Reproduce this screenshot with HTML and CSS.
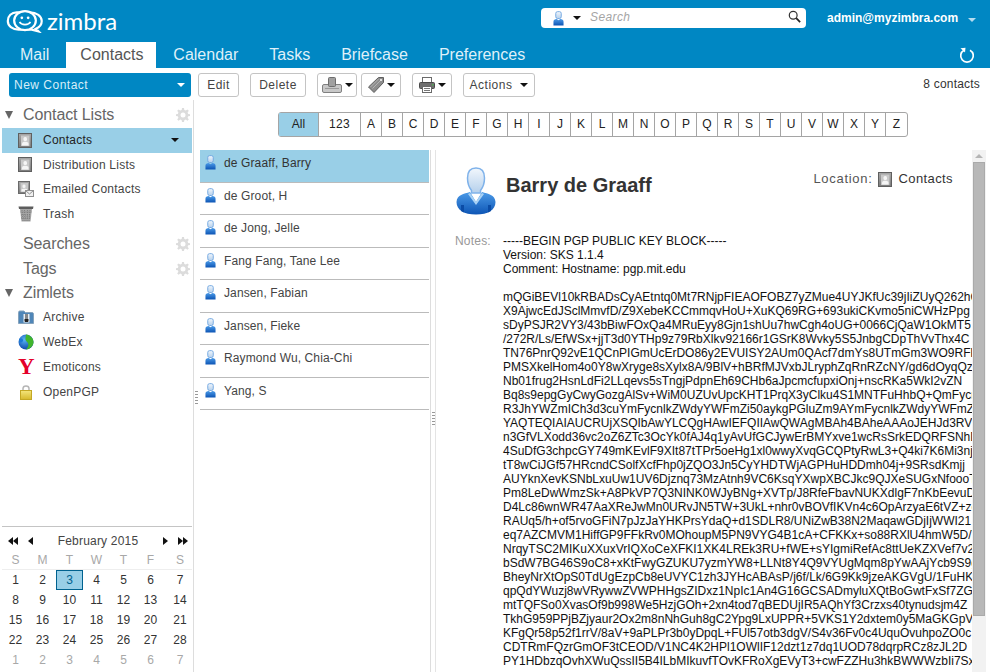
FILE: index.html
```html
<!DOCTYPE html>
<html lang="en">
<head>
    <meta charset="UTF-8">
    <title>Zimbra: Contacts</title>
    <link rel="stylesheet" href="styles.css">
</head>
<body>

<svg class="icon-defs" xmlns="http://www.w3.org/2000/svg">
    <defs>
        <linearGradient id="faceGrad" x1="0" y1="0" x2="0" y2="1">
            <stop offset="0" stop-color="#f2f7fc"/>
            <stop offset="1" stop-color="#b5d0ec"/>
        </linearGradient>
        <linearGradient id="suitGrad" x1="0" y1="0" x2="0" y2="1">
            <stop offset="0" stop-color="#4c9be8"/>
            <stop offset="1" stop-color="#0d55b5"/>
        </linearGradient>
        <linearGradient id="bookGrad" x1="0" y1="0" x2="0" y2="1">
            <stop offset="0" stop-color="#a8a8a8"/>
            <stop offset="1" stop-color="#7c7c7c"/>
        </linearGradient>
        <linearGradient id="lockGrad" x1="0" y1="0" x2="0" y2="1">
            <stop offset="0" stop-color="#f4e67c"/>
            <stop offset="1" stop-color="#d6b92c"/>
        </linearGradient>
        <radialGradient id="globeGrad" cx=".4" cy=".35" r=".7">
            <stop offset="0" stop-color="#58b6f5"/>
            <stop offset="1" stop-color="#0a3fa6"/>
        </radialGradient>
    </defs>
    <symbol id="i-person" viewBox="0 0 12 16">
        <rect x="3" y="0.5" width="6" height="7.5" rx="2" fill="url(#faceGrad)" stroke="#6fa5e0"/>
        <path d="M0.5 15.5V11.5C0.5 9.5 2 9 4 8.5L6 10L8 8.5C10 9 11.5 9.5 11.5 11.5V15.5Z" fill="url(#suitGrad)"/>
    </symbol>
    <symbol id="i-avatar" viewBox="0 0 40 48">
        <path d="M20 1C14 1 11.500 5 11.500 11C11.500 17 13.500 21 15.500 23.500V26H24.500V23.500C26.500 21 28.500 17 28.500 11C28.500 5 26 1 20 1Z" fill="url(#faceGrad)" stroke="#7fb2ea" stroke-width="1.500"/>
        <path d="M14 25C8 27 1 27.500 0.500 35C0.500 43 8 47.500 20 47.500C32 47.500 39.500 43 39.500 35C39 27.500 32 27 26 25L20 35Z" fill="url(#suitGrad)"/>
        <path d="M12 27L20 38L28 27L26 26L20 34.500L14 26Z" fill="#a9d2f5"/>
        <path d="M5 38V44L8 45.500V38ZM35 38V44L32 45.500V38Z" fill="#0b4ca6"/>
    </symbol>
    <symbol id="i-book" viewBox="0 0 14 15">
        <rect x="0.500" y="0.500" width="13" height="14" fill="url(#bookGrad)" stroke="#5f5f5f"/>
        <rect x="3" y="2.500" width="8.500" height="10.500" fill="#c8c8c8"/>
        <rect x="5.500" y="4" width="3.500" height="4" rx="1.500" fill="#f5f5f5"/>
        <path d="M4 12.500V10.500C4 9.300 5.500 8.800 7.200 8.800C9 8.800 10.500 9.300 10.500 10.500V12.500Z" fill="#f5f5f5"/>
    </symbol>
    <symbol id="i-book-mail" viewBox="0 0 16 16">
        <rect x="0.500" y="0.500" width="11" height="12" fill="url(#bookGrad)" stroke="#6a6a6a"/>
        <rect x="2.500" y="2" width="7.500" height="9" fill="#c8c8c8"/>
        <rect x="4.500" y="3.500" width="3" height="3.500" rx="1.300" fill="#f5f5f5"/>
        <path d="M3.500 10.500V8.500C3.500 7.500 10 7.500 9 8.500V10.500Z" fill="#f5f5f5"/>
        <rect x="7.500" y="9.500" width="8" height="6" fill="#f0f0f0" stroke="#8f8f8f"/>
        <path d="M7.500 9.500L11.500 13L15.500 9.500" fill="none" stroke="#8f8f8f"/>
    </symbol>
    <symbol id="i-trash" viewBox="0 0 16 16">
        <path d="M0.500 0.500H15.500L15 3H1Z" fill="#5d5d5d"/>
        <path d="M2 3H14L12.500 15.500H3.500Z" fill="#a5a5a5"/>
        <path d="M4 4L5 15M6.500 4L7 15M9.500 4L9 15M12 4L11 15M2.500 6H13.500M3 9H13M3 12H13" stroke="#6f6f6f" stroke-width=".7" stroke-dasharray="1 1"/>
    </symbol>
    <symbol id="i-archive" viewBox="0 0 16 14">
        <path d="M0.500 2.500C0.500 1.500 1 1 2 1H6L7.500 2.500H14C15 2.500 15.500 3 15.500 4V13.500H0.500Z" fill="#4f86b8" stroke="#86a3bc"/>
        <rect x="5.500" y="4" width="6" height="8.500" fill="#e8eef4"/>
        <path d="M7 5H10M7 7H10M7 9H10V11.500H7Z" stroke="#222" fill="#222"/>
    </symbol>
    <symbol id="i-globe" viewBox="0 0 16 16">
        <circle cx="8" cy="8" r="7.500" fill="url(#globeGrad)"/>
        <path d="M8 0.500C12 1 15.500 4 15.500 8C15.500 12 12 15 8 15.500C10 13 11 11 10 9C8.500 7.500 7 6 7.500 4C7.700 3 8 1.500 8 0.500Z" fill="#41b52d"/>
        <path d="M1 5C3 4 5 4.500 5 6.500C5 8 3 9 1 8Z" fill="#1c78d6"/>
    </symbol>
    <symbol id="i-lock" viewBox="0 0 12 16">
        <path d="M3 7V4.500C3 1 9 1 9 4.500V7" fill="none" stroke="#b6b6b6" stroke-width="1.500"/>
        <rect x="0.500" y="6.500" width="11" height="9" fill="url(#lockGrad)" stroke="#c4a824"/>
    </symbol>
    <symbol id="i-gear" viewBox="0 0 14 14">
        <path d="M6 0H8L8.300 2L9.800 2.600L11.400 1.400L12.800 2.800L11.600 4.400L12.200 6L14 6.200V8L12.200 8.300L11.600 9.800L12.800 11.400L11.400 12.800L9.800 11.600L8.300 12.200L8 14H6L5.700 12.200L4.200 11.600L2.600 12.800L1.200 11.400L2.400 9.800L1.800 8.300L0 8V6.200L1.800 6L2.400 4.400L1.200 2.800L2.600 1.400L4.200 2.600L5.700 2Z" fill="#dcdcdc"/>
        <circle cx="7" cy="7" r="2.500" fill="#fff"/>
    </symbol>
    <symbol id="i-move" viewBox="0 0 20 16">
        <rect x="0.500" y="7.500" width="19" height="8" rx="1.500" fill="#c8c8c8" stroke="#808080"/>
        <rect x="6.500" y="0.500" width="7" height="9" rx="1" fill="#a0a0a0" stroke="#6d6d6d"/>
        <path d="M3 11.500H17" stroke="#9a9a9a"/>
    </symbol>
    <symbol id="i-tag" viewBox="0 0 16 16">
        <path d="M10.500 0.500H15.500V5.500L6 15.500L0.500 10Z" fill="#8d8d8d" stroke="#5f5f5f"/>
        <path d="M2.500 10L10.500 2M4.500 11.500L12 4" stroke="#b3b3b3"/>
        <circle cx="13" cy="3" r="1" fill="#fff"/>
    </symbol>
    <symbol id="i-print" viewBox="0 0 16 16">
        <rect x="3.500" y="0.500" width="9" height="5" fill="#fff" stroke="#6a6a6a"/>
        <rect x="0.500" y="5.500" width="15" height="6" rx="1" fill="#6f6f6f" stroke="#4a4a4a"/>
        <rect x="3.500" y="9.500" width="9" height="6" fill="#fff" stroke="#6a6a6a"/>
        <path d="M5 11.500H11M5 13.500H11" stroke="#777"/>
        <rect x="13" y="7" width="1.500" height="1.500" fill="#4caf50"/>
    </symbol>
</svg>

<div class="app">
    <header class="topbar">
        <div class="logo">
            <svg class="logo-mark" viewBox="0 0 42 26">
                <path d="M12 3.500H26C34 3.500 39.500 7.500 39.500 13C39.500 17 37 20 33 21.500L36 24.500L28.500 22.500H14C7 22.500 2 18.500 2 13C2 7.500 6 3.500 12 3.500Z" fill="none" stroke="#fff" stroke-width="2.400"/>
                <ellipse cx="21" cy="12.500" rx="12" ry="10.500" fill="#0087c3" stroke="#fff" stroke-width="2.400"/>
                <circle cx="17.500" cy="9.500" r="1.500" fill="#fff"/>
                <circle cx="24.500" cy="9.500" r="1.500" fill="#fff"/>
                <path d="M15 14C17 18 25 18 27 14" fill="none" stroke="#fff" stroke-width="1.800"/>
            </svg>
            <span class="logo-word">zimbra</span>
        </div>
        <div class="search">
            <svg class="search-person"><use href="#i-person"/></svg>
            <span class="arrow arrow-dark"></span>
            <span class="search-text">Search</span>
            <svg class="search-glass" viewBox="0 0 15 15">
                <circle cx="6" cy="6" r="4.500" fill="none" stroke="#333" stroke-width="1.400"/>
                <path d="M9.500 9.500L14 14" stroke="#222" stroke-width="2"/>
            </svg>
        </div>
        <div class="user">admin@myzimbra.com</div>
        <span class="arrow arrow-pale"></span>
    </header>

    <nav class="tabs">
        <a class="tab">Mail</a>
        <a class="tab tab-active">Contacts</a>
        <a class="tab">Calendar</a>
        <a class="tab">Tasks</a>
        <a class="tab">Briefcase</a>
        <a class="tab">Preferences</a>
        <svg class="refresh" viewBox="0 0 16 16">
            <path d="M5 3.200A6.300 6.300 0 1 0 11 3.200" fill="none" stroke="#fff" stroke-width="1.700"/>
            <path d="M1.500 1.200L6.500 0.800L6 5.500Z" fill="#fff"/>
        </svg>
    </nav>

    <div class="toolbar">
        <button class="btn-new">New Contact <span class="arrow arrow-white"></span></button>
        <button class="btn btn-edit">Edit</button>
        <button class="btn btn-delete">Delete</button>
        <button class="btn btn-icon btn-move"><svg class="tool-move"><use href="#i-move"/></svg><span class="arrow arrow-dark"></span></button>
        <button class="btn btn-icon btn-tag"><svg class="tool-icon"><use href="#i-tag"/></svg><span class="arrow arrow-dark"></span></button>
        <button class="btn btn-icon btn-print"><svg class="tool-icon"><use href="#i-print"/></svg><span class="arrow arrow-dark"></span></button>
        <button class="btn btn-actions">Actions <span class="arrow arrow-dark"></span></button>
        <span class="count">8 contacts</span>
    </div>

    <div class="content">
        <aside class="sidebar">
            <div class="overview">
                <div class="section section-first">
                    <span class="twisty"></span><span class="section-name">Contact Lists</span>
                    <svg class="gear"><use href="#i-gear"/></svg>
                </div>
                <div class="tree-row tree-selected">
                    <svg class="tree-icon"><use href="#i-book"/></svg><span>Contacts</span>
                    <span class="arrow arrow-dark tree-arrow"></span>
                </div>
                <div class="tree-row"><svg class="tree-icon"><use href="#i-book"/></svg><span>Distribution Lists</span></div>
                <div class="tree-row"><svg class="tree-icon tree-icon-wide"><use href="#i-book-mail"/></svg><span>Emailed Contacts</span></div>
                <div class="tree-row"><svg class="tree-icon tree-icon-wide"><use href="#i-trash"/></svg><span>Trash</span></div>

                <div class="section section-searches">
                    <span class="twisty twisty-none"></span><span class="section-name">Searches</span>
                    <svg class="gear"><use href="#i-gear"/></svg>
                </div>
                <div class="section">
                    <span class="twisty twisty-none"></span><span class="section-name">Tags</span>
                    <svg class="gear"><use href="#i-gear"/></svg>
                </div>
                <div class="section section-zimlets">
                    <span class="twisty"></span><span class="section-name">Zimlets</span>
                </div>
                <div class="tree-row zimlet-row"><svg class="tree-icon tree-icon-wide"><use href="#i-archive"/></svg><span>Archive</span></div>
                <div class="tree-row zimlet-row"><svg class="tree-icon tree-icon-wide"><use href="#i-globe"/></svg><span>WebEx</span></div>
                <div class="tree-row zimlet-row"><span class="yahoo">Y</span><span>Emoticons</span></div>
                <div class="tree-row zimlet-row"><svg class="tree-icon tree-icon-wide"><use href="#i-lock"/></svg><span>OpenPGP</span></div>
            </div>

            <div class="calendar">
                <div class="cal-head">
                    <span class="cal-nav"><span class="tri-left"></span><span class="tri-left"></span></span>
                    <span class="cal-nav cal-nav-prev"><span class="tri-left"></span></span>
                    <span class="cal-title">February 2015</span>
                    <span class="cal-nav cal-nav-next"><span class="tri-right"></span></span>
                    <span class="cal-nav"><span class="tri-right"></span><span class="tri-right"></span></span>
                </div>
                <div class="cal-grid cal-dow">
                    <span>S</span><span>M</span><span>T</span><span>W</span><span>T</span><span>F</span><span>S</span>
                </div>
                <div class="cal-grid cal-days">
                    <span>1</span><span>2</span><span class="cal-today">3</span><span>4</span><span>5</span><span>6</span><span>7</span>
                    <span>8</span><span>9</span><span>10</span><span>11</span><span>12</span><span>13</span><span>14</span>
                    <span>15</span><span>16</span><span>17</span><span>18</span><span>19</span><span>20</span><span>21</span>
                    <span>22</span><span>23</span><span>24</span><span>25</span><span>26</span><span>27</span><span>28</span>
                    <span class="cal-off">1</span><span class="cal-off">2</span><span class="cal-off">3</span><span class="cal-off">4</span><span class="cal-off">5</span><span class="cal-off">6</span><span class="cal-off">7</span>
                </div>
            </div>
        </aside>

        <div class="sash sash-side"><i></i><i></i><i></i><i></i><i></i></div>

        <main class="main">
            <div class="alpha-wrap">
                <div class="alpha">
                    <span class="alpha-cell alpha-all">All</span>
                    <span class="alpha-cell alpha-num">123</span>
                    <span class="alpha-cell">A</span><span class="alpha-cell">B</span><span class="alpha-cell">C</span>
                    <span class="alpha-cell">D</span><span class="alpha-cell">E</span><span class="alpha-cell">F</span>
                    <span class="alpha-cell">G</span><span class="alpha-cell">H</span><span class="alpha-cell">I</span>
                    <span class="alpha-cell">J</span><span class="alpha-cell">K</span><span class="alpha-cell">L</span>
                    <span class="alpha-cell">M</span><span class="alpha-cell">N</span><span class="alpha-cell">O</span>
                    <span class="alpha-cell">P</span><span class="alpha-cell">Q</span><span class="alpha-cell">R</span>
                    <span class="alpha-cell">S</span><span class="alpha-cell">T</span><span class="alpha-cell">U</span>
                    <span class="alpha-cell">V</span><span class="alpha-cell">W</span><span class="alpha-cell">X</span>
                    <span class="alpha-cell">Y</span><span class="alpha-cell">Z</span>
                </div>
            </div>

            <div class="split">
                <div class="list">
                    <div class="list-row list-selected"><svg class="list-icon"><use href="#i-person"/></svg>de Graaff, Barry</div>
                    <div class="list-row"><svg class="list-icon"><use href="#i-person"/></svg>de Groot, H</div>
                    <div class="list-row"><svg class="list-icon"><use href="#i-person"/></svg>de Jong, Jelle</div>
                    <div class="list-row"><svg class="list-icon"><use href="#i-person"/></svg>Fang Fang, Tane Lee</div>
                    <div class="list-row"><svg class="list-icon"><use href="#i-person"/></svg>Jansen, Fabian</div>
                    <div class="list-row"><svg class="list-icon"><use href="#i-person"/></svg>Jansen, Fieke</div>
                    <div class="list-row"><svg class="list-icon"><use href="#i-person"/></svg>Raymond Wu, Chia-Chi</div>
                    <div class="list-row"><svg class="list-icon"><use href="#i-person"/></svg>Yang, S</div>
                </div>

                <div class="sash sash-list"><i></i><i></i><i></i><i></i><i></i></div>

                <div class="pane">
                    <div class="pane-body">
                        <div class="card-head">
                            <svg class="avatar"><use href="#i-avatar"/></svg>
                            <h1 class="card-name">Barry de Graaff</h1>
                            <div class="location">Location: <svg class="location-icon"><use href="#i-book"/></svg> <span class="location-name">Contacts</span></div>
                        </div>
                        <div class="notes">
                            <div class="notes-label">Notes:</div>
                            <pre class="notes-text">-----BEGIN PGP PUBLIC KEY BLOCK-----
Version: SKS 1.1.4
Comment: Hostname: pgp.mit.edu

mQGiBEVl10kRBADsCyAEtntq0Mt7RNjpFIEAOFOBZ7yZMue4UYJKfUc39jIiZUyQ262hC
X9AjwcEdJSclMmvfD/Z9XebeKCCmmqvHoU+XuKQ69RG+693ukiCKvmo5niCWHzPpg
sDyPSJR2VY3/43bBiwFOxQa4MRuEyy8Gjn1shUu7hwCgh4oUG+0066CjQaW1OkMT5
/272R/Ls/EfWSx+jjT3d0YTHp9z79RbXlkv92166r1GSrK8Wvky5S5JnbgCDpThVvThx4C
TN76PnrQ92vE1QCnPIGmUcErDO86y2EVUISY2AUm0QAcf7dmYs8UTmGm3WO9RFk
PMSXkelHom4o0Y8wXryge8sXylx8A/9BlV+hBRfMJVxbJLryphZqRnRZcNY/gd6dOyqQzc
Nb01frug2HsnLdFi2LLqevs5sTngjPdpnEh69CHb6aJpcmcfupxiOnj+nscRKa5WkI2vZN
Bq8s9epgGyCwyGozgAlSv+WiM0UZUvUpcKHT1PrqX3yClku4S1MNTFuHhbQ+QmFycn
R3JhYWZmICh3d3cuYmFycnlkZWdyYWFmZi50aykgPGluZm9AYmFycnlkZWdyYWFmZ
YAQTEQIAIAUCRUjXSQIbAwYLCQgHAwIEFQIIAwQWAgMBAh4BAheAAAoJEHJd3RVtN
n3GfVLXodd36vc2oZ6ZTc3OcYk0fAJ4q1yAvUfGCJywErBMYxve1wcRsSrkEDQRFSNhD
4SuDfG3chpcGY749mKEvlF9XIt87tTPr5oeHg1xl0wwyXvqGCQPtyRwL3+Q4ki7K6Mi3njI
tT8wCiJGf57HRcndCSolfXcfFhp0jZQO3Jn5CyYHDTWjAGPHuHDDmh04j+9SRsdKmjj
AUYknXevKSNbLxuUw1UV6Djznq73MzAtnh9VC6KsqYXwpXBCJkc9QJXeSUGxNfoooT
Pm8LeDwWmzSk+A8PkVP7Q3NINK0WJyBNg+XVTp/J8RfeFbavNUKXdlgF7nKbEevuD
D4Lc86wnWR47AaXReJwMn0URvJN5TW+3UkL+nhr0vBOVfIKVn4c6OpArzyaE6tVZ+zc
RAUq5/h+of5rvoGFiN7pJzJaYHKPrsYdaQ+d1SDLR8/UNiZwB38N2MaqawGDjIjWWI21
eq7AZCMVM1HiffGP9FFkRv0MOhoupM5PN9VYG4B1cA+CFKKx+so88RXlU4hmW5D/Y
NrqyTSC2MIKuXXuxVrIQXoCeXFKI1XK4LREk3RU+fWE+sYIgmiRefAc8ttUeKZXVef7v2L
bSdW7BG46S9oC8+xKtFwyGZUKU7yzmYW8+LLNt8Y4Q9VYUgMqm8pYwAAjYcb9S9g
BheyNrXtOpS0TdUgEzpCb8eUVYC1zh3JYHcABAsP/j6f/Lk/6G9Kk9jzeAKGVgU/1FuHK
qpQdYWuzj8wVRywwZVWPHHgsZIDxz1NpIc1An4G16GCSADmyluXQtBoGwtFxSf7ZGZ
mtTQFSo0XvasOf9b998We5HzjGOh+2xn4tod7qBEDUjIR5AQhYf3Crzxs40tynudsjm4Z
TkhG959PPjBZjyaur2Ox2m8nNhGuh8gC2Ypg9LxUPPR+5VKS1Y2dxtem0y5MaGKGpV
KFgQr58p52f1rrV/8aV+9aPLPr3b0yDpqL+FUl57otb3dgV/S4v36Fv0c4UquOvuhpoZO0c
CDTRmFQzrGmOF3tCEOD/V1NC4K2HPl1OWlIF12dzt1z7dq1UOD78dqrpRCz8zJL2D
PY1HDbzqOvhXWuQssII5B4ILbMIkuvfTOvKFRoXgEVyT3+cwFZZHu3hkBWWWzbIi7Sx/</pre>
                        </div>
                    </div>
                    <div class="scrollbar">
                        <span class="scroll-up"></span>
                        <div class="scroll-thumb"></div>
                    </div>
                </div>
            </div>
        </main>
    </div>
</div>

</body>
</html>
```

FILE: styles.css
```css
html, body {
    margin: 0;
    padding: 0;
    height: 100%;
    overflow: hidden;
}

body {
    font-family: "Liberation Sans", Arial, sans-serif;
    font-size: 12px;
    color: #333;
    background: #fff;
}

.icon-defs {
    display: block;
    width: 0;
    height: 0;
}

.app {
    display: flex;
    flex-direction: column;
    width: 990px;
    height: 672px;
    overflow: hidden;
}

/* small dropdown triangles */
.arrow {
    display: inline-block;
    width: 0;
    height: 0;
    border-left: 4px solid transparent;
    border-right: 4px solid transparent;
    border-top: 4px solid #111;
    flex: none;
}

.arrow-white { border-top-color: #fff; }
.arrow-pale { border-top-color: #b5dcef; }

/* top bar */
.topbar {
    display: flex;
    align-items: center;
    height: 42px;
    background: #0087c3;
    flex: none;
}

.logo {
    display: flex;
    align-items: center;
    width: 541px;
    height: 37px;
    padding-left: 6px;
    box-sizing: border-box;
}

.logo-mark {
    width: 38px;
    height: 24px;
    flex: none;
}

.logo-word {
    font-family: Lato, sans-serif;
    font-size: 24px;
    line-height: 30px;
    color: #fff;
    margin-left: 3px;
}

.search {
    display: flex;
    align-items: center;
    width: 265px;
    height: 20px;
    margin-top: -6px;
    background: #fff;
    border-radius: 4px;
    box-sizing: border-box;
    padding: 0 5px 0 12px;
}

.search-person {
    width: 11px;
    height: 15px;
    flex: none;
}

.search .arrow {
    margin-left: 9px;
}

.search-text {
    flex: 1;
    margin: -2px 0 0 9px;
    font-style: italic;
    color: #a5a5a5;
    letter-spacing: .4px;
}

.search-glass {
    width: 13px;
    height: 13px;
    margin-top: -3px;
}

.user {
    margin: -6px 0 0 21px;
    font-weight: bold;
    color: #fff;
}

.arrow-pale {
    margin: -3px 0 0 10px;
}

/* tabs */
.tabs {
    display: flex;
    height: 26px;
    padding-left: 6px;
    background: #0087c3;
    flex: none;
}

.tab {
    padding: 0 14px;
    font-size: 16px;
    line-height: 26px;
    color: #dff0f9;
    margin-right: 3px;
}

.tab-active {
    background: #fff;
    color: #555;
    width: 90px;
    box-sizing: border-box;
    text-align: center;
}

.refresh {
    width: 16px;
    height: 16px;
    margin: 5px 15px 0 auto;
}

/* toolbar */
.toolbar {
    display: flex;
    align-items: flex-start;
    height: 32px;
    padding: 5px 10px 0 9px;
    box-sizing: border-box;
    flex: none;
}

.btn, .btn-new {
    font-family: "Liberation Sans", Arial, sans-serif;
    font-size: 12px;
    letter-spacing: .5px;
    height: 24px;
    padding: 0;
    box-sizing: border-box;
    display: flex;
    align-items: center;
    justify-content: center;
}

.btn {
    background: #fff;
    color: #444;
    border: 1px solid #c4c4c4;
    border-radius: 3px;
}

.btn-new {
    width: 182px;
    justify-content: space-between;
    padding: 0 6px 0 5px;
    background: #0087c3;
    color: #d8eef8;
    border: 0;
    border-radius: 3px;
}

.btn-edit { width: 41px; margin-left: 7px; }
.btn-delete { width: 56px; margin-left: 11px; }
.btn-move { width: 40px; margin-left: 11px; }
.btn-tag { width: 40px; margin-left: 4px; }
.btn-print { width: 40px; margin-left: 11px; }
.btn-actions { width: 72px; margin-left: 11px; gap: 8px; }

.btn-icon {
    gap: 3px;
}

.tool-move {
    width: 20px;
    height: 16px;
}

.tool-icon {
    width: 16px;
    height: 16px;
}

.count {
    margin-left: auto;
    line-height: 22px;
    color: #333;
    letter-spacing: .2px;
}

/* left column */
.content {
    display: flex;
    flex: 1;
    min-height: 0;
}

.sidebar {
    display: flex;
    flex-direction: column;
    width: 194px;
    padding-top: 2px;
    border-right: 1px solid #ddd;
    box-sizing: border-box;
    flex: none;
}

.overview {
    flex: 1;
    min-height: 0;
}

.section {
    display: flex;
    align-items: center;
    height: 25px;
    padding-left: 5px;
    font-size: 16px;
    color: #666;
    letter-spacing: -.1px;
}

.section-first { height: 26px; }
.section-searches { margin-top: 5.500px; }
.section-zimlets { height: 22.500px; }

.twisty {
    width: 0;
    height: 0;
    border-left: 4.500px solid transparent;
    border-right: 4.500px solid transparent;
    border-top: 8px solid #666;
    margin-right: 9px;
    flex: none;
}

.twisty-none {
    border-top-color: transparent;
}

.section-name {
    flex: 1;
    padding-left: 1px;
}

.gear {
    width: 14px;
    height: 14px;
    margin-right: 3px;
    flex: none;
}

.tree-row {
    display: flex;
    align-items: center;
    height: 24.500px;
    margin-left: 2px;
    width: 190px;
    padding-left: 16px;
    box-sizing: border-box;
    color: #444;
    letter-spacing: .23px;
}

.tree-selected {
    background: #99cfe7;
    color: #222;
}

.tree-icon {
    width: 14px;
    height: 15px;
    margin-right: 11px;
    flex: none;
}

.tree-icon-wide {
    width: 16px;
    height: 16px;
    margin-right: 9px;
}

.tree-arrow {
    margin-left: auto;
    margin-right: 13px;
}

.zimlet-row {
    height: 25px;
}

.yahoo {
    width: 16px;
    margin-right: 9px;
    font-family: "Liberation Serif", serif;
    font-size: 23px;
    font-weight: bold;
    line-height: 20px;
    color: #e4002b;
    text-align: center;
    flex: none;
}

/* mini calendar */
.calendar {
    height: 146px;
    margin-left: 2px;
    width: 190px;
    border-top: 1px solid #c4c4c4;
    flex: none;
    box-sizing: border-box;
}

.cal-head {
    display: flex;
    align-items: center;
    height: 23px;
    margin-top: 2px;
    padding: 0 4px 0 6px;
    color: #444;
    letter-spacing: .2px;
}

.cal-nav {
    display: flex;
    width: 10px;
    flex: none;
}

.cal-nav-prev { margin-left: 10px; }
.cal-nav-next { margin-right: 10px; justify-content: flex-end; }

.cal-title {
    flex: 1;
    text-align: center;
}

.tri-left, .tri-right {
    width: 0;
    height: 0;
    border-top: 4px solid transparent;
    border-bottom: 4px solid transparent;
}

.tri-left { border-right: 5px solid #111; }
.tri-right { border-left: 5px solid #111; }

.cal-grid {
    display: grid;
    grid-template-columns: repeat(6, 27px) 28px;
    text-align: center;
}

.cal-grid span:nth-child(7n) {
    padding-left: 4px;
}

.cal-dow {
    height: 17px;
    line-height: 17px;
    color: #a8a8a8;
    border-bottom: 1px solid #eee;
}

.cal-days span {
    height: 20px;
    line-height: 20px;
    color: #333;
    box-sizing: border-box;
}

.cal-days .cal-today {
    background: #99cfe7;
    border: 1px solid #00628f;
    color: #00628f;
    line-height: 18px;
}

.cal-days .cal-off {
    color: #a8a8a8;
}

/* sash handles */
.sash {
    display: flex;
    flex-direction: column;
    justify-content: center;
    gap: 2px;
    width: 4px;
    flex: none;
}

.sash i {
    display: block;
    width: 3px;
    height: 1px;
    background: #999;
    margin-left: 1px;
}

.sash-side { padding-top: 22px; }
.sash-list { padding-top: 14px; }

/* main area */
.main {
    display: flex;
    flex-direction: column;
    flex: 1;
    min-width: 0;
}

.alpha-wrap {
    display: flex;
    height: 50px;
    padding: 12px 0 0 80px;
    box-sizing: border-box;
    flex: none;
}

.alpha {
    display: flex;
    height: 25px;
    border: 1px solid #a5a5a5;
    border-radius: 3px;
    box-sizing: border-box;
}

.alpha-cell {
    width: 21px;
    border-right: 1px solid #a5a5a5;
    box-sizing: border-box;
    line-height: 23px;
    text-align: center;
    color: #222;
}

.alpha-cell:last-child {
    border-right: 0;
}

.alpha-all {
    width: 40px;
    background: #99cfe7;
}

.alpha-num {
    width: 42px;
    letter-spacing: .4px;
}

.split {
    display: flex;
    flex: 1;
    min-height: 0;
}

.list {
    width: 231px;
    margin-left: 2px;
    border-right: 1px solid #ddd;
    flex: none;
    box-sizing: border-box;
}

.list-row {
    display: flex;
    height: 32.500px;
    width: 229px;
    padding: 6px 0 0 5px;
    box-sizing: border-box;
    border-bottom: 1px solid #bbb;
    color: #444;
    letter-spacing: .12px;
    line-height: 15px;
}

.list-selected {
    background: #99cfe7;
    color: #333;
}

.list-icon {
    width: 11px;
    height: 15px;
    margin: -1px 8px 0 0;
    flex: none;
}

/* reading pane */
.pane {
    display: flex;
    flex: 1;
    min-width: 0;
    border-left: 1px solid #e4e4e4;
    padding-right: 4px;
}

.pane-body {
    flex: 1;
    min-width: 0;
    overflow: hidden;
    padding-left: 19px;
}

.card-head {
    display: flex;
    align-items: flex-start;
    height: 84px;
}

.avatar {
    width: 40px;
    height: 48px;
    margin: 17px 0 0 1px;
    flex: none;
}

.card-name {
    margin: 23px 0 0 10px;
    font-size: 20px;
    line-height: 24px;
    font-weight: bold;
    color: #333;
}

.location {
    display: flex;
    align-items: center;
    margin: 21px 19px 0 auto;
    font-size: 13px;
    line-height: 16px;
    color: #555;
    letter-spacing: .7px;
}

.location-icon {
    width: 14px;
    height: 15px;
    margin: 0 6px;
}

.location-name {
    color: #333;
    letter-spacing: .4px;
}

.notes {
    display: flex;
}

.notes-label {
    width: 48px;
    line-height: 14px;
    color: #999;
    letter-spacing: .2px;
    flex: none;
}

.notes-text {
    margin: 0;
    font-family: "Liberation Sans", Arial, sans-serif;
    font-size: 12px;
    line-height: 14px;
    color: #111;
    white-space: pre;
}

.scrollbar {
    display: flex;
    flex-direction: column;
    align-items: center;
    width: 14px;
    background: #f2f2f2;
    flex: none;
}

.scroll-up {
    width: 0;
    height: 0;
    margin: 4px 0;
    border-left: 4px solid transparent;
    border-right: 4px solid transparent;
    border-bottom: 4px solid #b5b5b5;
    flex: none;
}

.scroll-thumb {
    width: 12px;
    height: 454px;
    background: #b8b8b8;
    border: 1px solid #aaa;
    box-sizing: border-box;
}
```
